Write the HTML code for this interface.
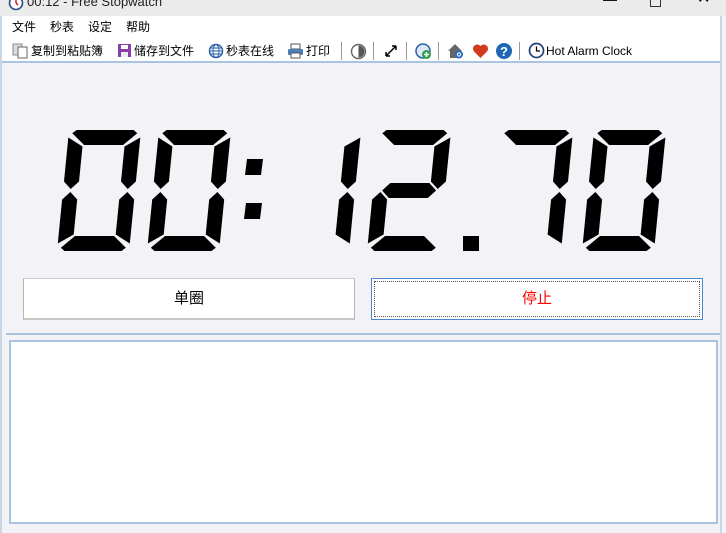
<!DOCTYPE html>
<html><head><meta charset="utf-8"><style>
*{margin:0;padding:0;box-sizing:border-box}
body{width:726px;height:533px;overflow:hidden;background:#f3f2f6;font-family:"Liberation Sans","Noto Sans CJK SC",sans-serif;position:relative}
.abs{position:absolute}
#title{left:0;top:0;width:726px;height:16px;background:#ebebeb}
#menu{left:2px;top:16px;width:718px;height:47px;background:#fff;border-bottom:2px solid #a9c4e0}
.t{position:absolute;font-size:12px;color:#000;white-space:nowrap;line-height:14px}
.sep{position:absolute;top:42px;width:1px;height:18px;background:#999}
.btn{position:absolute;top:278px;height:42px;background:#fff;font-size:15px;text-align:center;line-height:40px}
</style></head><body>
<div id="title" class="abs"></div>
<svg class="abs" style="left:8px;top:-5px" width="16" height="16" viewBox="0 0 16 16"><circle cx="8" cy="8" r="6.5" fill="#fff" stroke="#2a4c80" stroke-width="1.6"/><path d="M8 8L8 4M8 8L10 10" stroke="#c00" stroke-width="1.3"/></svg>
<div class="t" style="left:27px;top:-5px;font-size:13px;color:#222">00:12 - Free Stopwatch</div>
<div class="t" style="left:603px;top:-8px;font-size:14px">—</div>
<div class="abs" style="left:650px;top:-4px;width:11px;height:11px;border:1px solid #333"></div>
<div class="t" style="left:697px;top:-8px;font-size:16px">✕</div>
<div class="abs" style="left:720px;top:16px;width:2px;height:517px;background:#c9d6e6"></div>
<div class="abs" style="left:0;top:16px;width:2px;height:517px;background:#c9d6e6"></div>
<div id="menu" class="abs"></div>
<div class="t" style="left:12px;top:20px">文件</div>
<div class="t" style="left:50px;top:20px">秒表</div>
<div class="t" style="left:88px;top:20px">设定</div>
<div class="t" style="left:126px;top:20px">帮助</div>

<svg class="abs" style="left:12px;top:43px" width="18" height="16"><rect x="1" y="1" width="9" height="11" fill="#ddd" stroke="#888"/><rect x="6" y="4" width="9" height="11" fill="#fff" stroke="#666"/></svg>
<div class="t" style="left:31px;top:44px">复制到粘贴簿</div>
<svg class="abs" style="left:117px;top:43px" width="16" height="16"><rect x="1" y="1" width="13" height="13" fill="#8a3fa8"/><rect x="4" y="2" width="7" height="4" fill="#fff"/><rect x="4" y="9" width="7" height="5" fill="#eee"/></svg>
<div class="t" style="left:134px;top:44px">储存到文件</div>
<svg class="abs" style="left:208px;top:43px" width="16" height="16"><circle cx="8" cy="8" r="6.5" fill="#fff" stroke="#2b5fa8" stroke-width="1.5"/><ellipse cx="8" cy="8" rx="3" ry="6.5" fill="none" stroke="#2b5fa8"/><path d="M1.5 8H14.5M2.5 5H13.5M2.5 11H13.5" stroke="#2b5fa8"/></svg>
<div class="t" style="left:226px;top:44px">秒表在线</div>
<svg class="abs" style="left:287px;top:43px" width="17" height="16"><rect x="4" y="1" width="9" height="5" fill="#fff" stroke="#555"/><rect x="1" y="6" width="15" height="6" rx="1" fill="#4a7fb8"/><rect x="4" y="10" width="9" height="5" fill="#fff" stroke="#555"/></svg>
<div class="t" style="left:306px;top:44px">打印</div>
<div class="sep" style="left:341px"></div>
<svg class="abs" style="left:350px;top:43px" width="17" height="17"><circle cx="8.5" cy="8.5" r="7" fill="#fff" stroke="#666" stroke-width="1.4"/><path d="M8.5 2.5A6 6 0 0 1 8.5 14.5Z" fill="#555"/></svg>
<div class="sep" style="left:373px"></div>
<svg class="abs" style="left:384px;top:44px" width="14" height="14"><path d="M2 12L12 2M2 12V8M2 12H6M12 2H8M12 2V6" stroke="#000" stroke-width="1.5" fill="none"/></svg>
<div class="sep" style="left:406px"></div>
<svg class="abs" style="left:415px;top:43px" width="17" height="17"><circle cx="8" cy="8" r="7" fill="#dde8f4" stroke="#2b5fa8" stroke-width="1.5"/><circle cx="11.5" cy="11.5" r="4.5" fill="#2a9d4a"/><path d="M11.5 9v5M9 11.5h5" stroke="#fff" stroke-width="1.5"/></svg>
<div class="sep" style="left:438px"></div>
<svg class="abs" style="left:447px;top:42px" width="17" height="18"><path d="M1 9L8 2L15 9H13V16H3V9Z" fill="#666"/><circle cx="12" cy="12.5" r="4" fill="#2b6cc0"/><circle cx="12" cy="12.5" r="1.6" fill="none" stroke="#fff"/></svg>
<svg class="abs" style="left:472px;top:43px" width="17" height="16"><path d="M8.5 15L2 8.5A3.7 3.7 0 0 1 8.5 3A3.7 3.7 0 0 1 15 8.5Z" fill="#d33a1e"/></svg>
<svg class="abs" style="left:495px;top:42px" width="18" height="18"><circle cx="9" cy="9" r="8" fill="#1f66b5"/><text x="9" y="14" font-size="13" font-weight="bold" fill="#fff" text-anchor="middle" font-family="Liberation Sans">?</text></svg>
<div class="sep" style="left:519px"></div>
<svg class="abs" style="left:528px;top:42px" width="17" height="17"><circle cx="8.5" cy="8.5" r="7" fill="#fff" stroke="#1f3e7a" stroke-width="1.7"/><path d="M8.5 4.5V9H12" stroke="#000" stroke-width="1.3" fill="none"/></svg>
<div class="t" style="left:546px;top:44px">Hot Alarm Clock</div>

<svg id="dg" class="abs" style="left:0;top:0" width="726" height="280"></svg>

<div class="btn" style="left:23px;width:332px;border:1px solid #b5b5b5;border-top-color:#ccc;border-bottom:2px solid #c6c8c4">单圈</div>
<div class="btn" style="left:371px;width:332px;border:1px solid #4a8ad0;color:#f00"><div style="position:absolute;left:2px;top:2px;right:2px;bottom:2px;border:1px dotted #555"></div>停止</div>
<div class="abs" style="left:6px;top:333px;width:714px;height:2px;background:#a9c4e0"></div>
<div class="abs" style="left:9px;top:340px;width:709px;height:184px;background:#fff;border:2px solid #a9c4e0"></div>
<script>
var s='',H=121,T=15,K=0.1,Y0=130,W=72,g=1.5,c=4;
function P(pts,x0){return '<polygon fill="#000" points="'+pts.map(function(p){return (x0+p[0]+(H-p[1])*K).toFixed(1)+','+(Y0+p[1]).toFixed(1)}).join(' ')+'"/>'}
function mir(a){return a.map(function(p){return [W-p[0],p[1]]})}
var M=H/2,h=T/2;
var f=[[0,g+2+c],[T,T+g],[T,M-h-g],[h,M-g],[0,M-h-g]];
var e=[[0,M+h+g],[h,M+g],[T,M+h+g],[T,H-T-g],[0,H-g-2-c]];
var m={a:[[g+2+c,0],[W-g-2-c,0],[W-g-2,c*0.8],[W-T-g,T],[T+g,T],[g+2,c*0.8]],
d:[[T+g,H-T],[W-T-g,H-T],[W-g-2,H-c*0.8],[W-g-2-c,H],[g+2+c,H],[g+2,H-c*0.8]],
g:[[h+g,M],[T+g,M-h],[W-T-g,M-h],[W-h-g,M],[W-T-g,M+h],[T+g,M+h]],
f:f,e:e,b:mir(f),c:mir(e)};
function dig(str,x0){for(var i=0;i<str.length;i++)s+=P(m[str[i]],x0)}
dig('abcdef',57);dig('abcdef',147);dig('bc',277);dig('abged',367);dig('abc',489);dig('abcdef',582);
s+='<polygon fill="#000" points="247,159 263,159 261,175 245,175"/><polygon fill="#000" points="246,203 262,203 260,219 244,219"/>';
s+='<rect x="463" y="236" width="16" height="15" fill="#000"/>';
document.getElementById('dg').innerHTML=s;
</script>
</body></html>
